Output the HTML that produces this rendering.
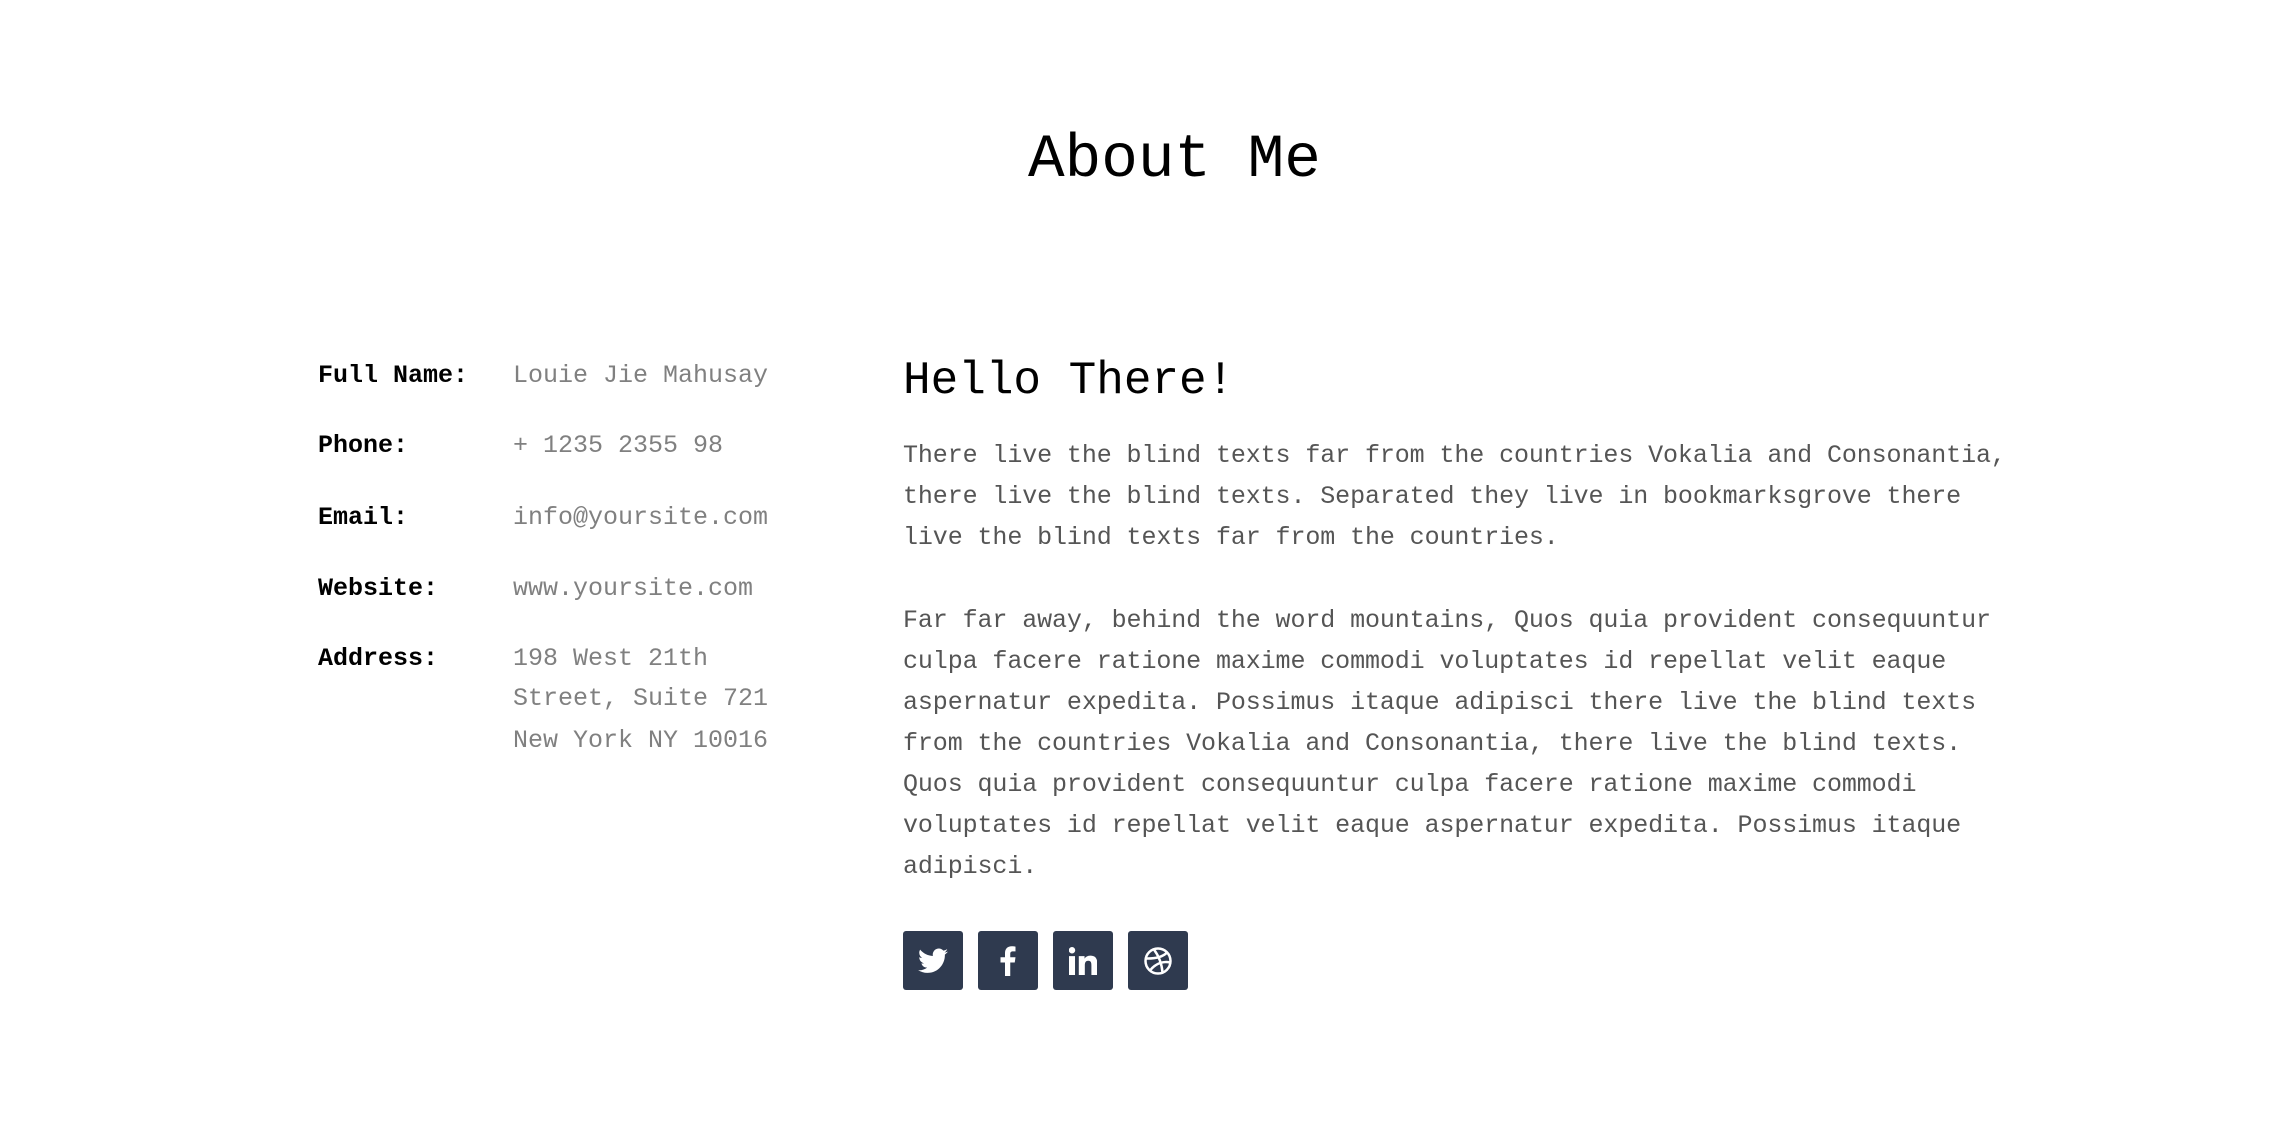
<!DOCTYPE html>
<html><head><meta charset="utf-8"><style>
body{margin:0;background:#fff;width:2290px;height:1123px;overflow:hidden;position:relative;font-family:"Liberation Mono",monospace}
.a{position:absolute;white-space:nowrap;line-height:1}
h1{position:absolute;left:1028px;top:130px;margin:0;font-weight:normal;font-size:61px;line-height:1;color:#000;font-family:"Liberation Mono",monospace}
.l{left:318px;font-weight:bold;color:#000;font-size:25px}
.v{left:513px;color:#808080;font-size:25px}
h2{position:absolute;left:903px;top:358px;margin:0;font-weight:normal;font-size:46px;line-height:1;color:#000;font-family:"Liberation Mono",monospace}
p{position:absolute;left:903px;margin:0;font-size:25px;line-height:41px;color:#555;width:1150px;letter-spacing:-0.1px}
.ic{position:absolute;top:931px;width:60px;height:59px;background:#2f3a4f;border-radius:3px;display:flex;align-items:center;justify-content:center}
</style></head><body>
<h1>About Me</h1>
<div class="a l" style="top:363px">Full Name:</div><div class="a v" style="top:363px">Louie Jie Mahusay</div>
<div class="a l" style="top:433px">Phone:</div><div class="a v" style="top:433px">+ 1235 2355 98</div>
<div class="a l" style="top:505px">Email:</div><div class="a v" style="top:505px">info@yoursite.com</div>
<div class="a l" style="top:576px">Website:</div><div class="a v" style="top:576px">www.yoursite.com</div>
<div class="a l" style="top:646px">Address:</div><div class="a v" style="top:646px">198 West 21th</div>
<div class="a v" style="top:686px">Street, Suite 721</div>
<div class="a v" style="top:728px">New York NY 10016</div>
<h2>Hello There!</h2>
<p style="top:435px">There live the blind texts far from the countries Vokalia and Consonantia,<br>there live the blind texts. Separated they live in bookmarksgrove there<br>live the blind texts far from the countries.</p>
<p style="top:600px">Far far away, behind the word mountains, Quos quia provident consequuntur<br>culpa facere ratione maxime commodi voluptates id repellat velit eaque<br>aspernatur expedita. Possimus itaque adipisci there live the blind texts<br>from the countries Vokalia and Consonantia, there live the blind texts.<br>Quos quia provident consequuntur culpa facere ratione maxime commodi<br>voluptates id repellat velit eaque aspernatur expedita. Possimus itaque<br>adipisci.</p>
<div class="ic" style="left:903px"><svg width="30" height="26" viewBox="0 0 24 20"><path fill="#fff" d="M24 2.4c-.9.4-1.8.7-2.8.8 1-.6 1.8-1.6 2.2-2.7-1 .6-2 1-3.1 1.2C19.4.7 18.1 0 16.7 0c-2.7 0-4.9 2.2-4.9 4.9 0 .4 0 .8.1 1.1C7.8 5.8 4.2 3.9 1.700.9c-.4.7-.7 1.600-.7 2.500 0 1.700.9 3.200 2.200 4.100-.8 0-1.600-.2-2.200-.6v.1c0 2.400 1.700 4.400 3.900 4.800-.4.1-.8.2-1.300.2-.3 0-.6 0-.9-.1.6 2 2.400 3.400 4.600 3.400-1.700 1.300-3.800 2.100-6.100 2.100-.4 0-.8 0-1.200-.1 2.200 1.400 4.800 2.200 7.500 2.200 9.100 0 14-7.500 14-14v-.6c1-.7 1.800-1.600 2.500-2.500z"/></svg></div>
<div class="ic" style="left:978px"><svg width="16" height="30" viewBox="0 0 10 20"><path fill="#fff" d="M6.5 20V11h3l.5-3.5H6.5V5.3c0-1 .3-1.7 1.8-1.7H10V.4C9.7.3 8.6.2 7.4.2 4.8.2 3 1.8 3 4.7v2.8H0V11h3v9z"/></svg></div>
<div class="ic" style="left:1053px"><svg width="28" height="28" viewBox="0 0 20 20"><path fill="#fff" d="M0 6.5h4.3V20H0zM2.15 0a2.3 2.3 0 110 4.6 2.3 2.3 0 010-4.6zM7 6.5h4.1v1.9c.6-1.1 2-2.2 4.1-2.2 4.3 0 5.1 2.8 5.1 6.5V20h-4.3v-6.6c0-1.6 0-3.6-2.2-3.6s-2.5 1.7-2.5 3.5V20H7z"/></svg></div>
<div class="ic" style="left:1128px"><svg width="30" height="30" viewBox="0 0 24 24" fill="none" stroke="#fff" stroke-width="2"><circle cx="12" cy="12" r="10"/><path d="M8.6 2.6c4 5.3 6.4 11.6 7 18.5M19.2 5.2C15.8 8.8 9.5 10.2 2.2 10M21.9 13.2c-5.8-1.3-11.6.8-16 6"/></svg></div>
</body></html>
